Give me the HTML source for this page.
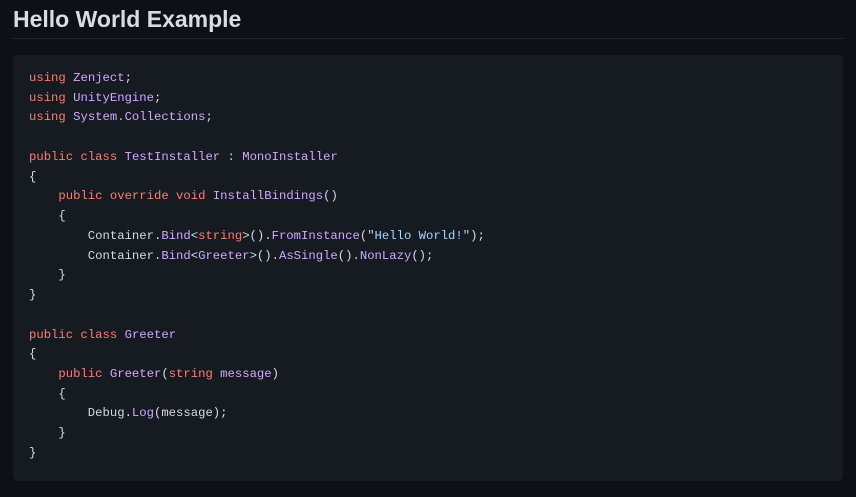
<!DOCTYPE html>
<html><head><meta charset="utf-8"><style>
html,body{margin:0;padding:0;background:#0d1117;width:856px;height:497px;overflow:hidden}
h2{position:absolute;left:13px;top:4px;margin:0;font:bold 23px/30px "Liberation Sans",sans-serif;color:#d6dde6}
.hr{position:absolute;left:13px;top:38px;width:830px;height:1px;background:#21262d}
.box{position:absolute;left:13px;top:55px;width:830px;height:426px;background:#161b22;border-radius:6px}
pre{position:absolute;left:29px;top:69px;margin:0;font:12.25px/19.74px "Liberation Mono",monospace;color:#d5dce4}
.k{color:#ff7b72}.t{color:#d2a8ff}.s{color:#a5d6ff}
</style></head><body>
<h2>Hello World Example</h2><div class="hr"></div>
<div class="box"></div>
<pre><span class="k">using</span> <span class="t">Zenject</span>;
<span class="k">using</span> <span class="t">UnityEngine</span>;
<span class="k">using</span> <span class="t">System.Collections</span>;

<span class="k">public</span> <span class="k">class</span> <span class="t">TestInstaller</span> : <span class="t">MonoInstaller</span>
{
    <span class="k">public</span> <span class="k">override</span> <span class="k">void</span> <span class="t">InstallBindings</span>()
    {
        Container.<span class="t">Bind</span>&lt;<span class="k">string</span>&gt;().<span class="t">FromInstance</span>(<span class="s">"Hello World!"</span>);
        Container.<span class="t">Bind</span>&lt;<span class="t">Greeter</span>&gt;().<span class="t">AsSingle</span>().<span class="t">NonLazy</span>();
    }
}

<span class="k">public</span> <span class="k">class</span> <span class="t">Greeter</span>
{
    <span class="k">public</span> <span class="t">Greeter</span>(<span class="k">string</span> <span class="t">message</span>)
    {
        Debug.<span class="t">Log</span>(message);
    }
}</pre>
</body></html>
